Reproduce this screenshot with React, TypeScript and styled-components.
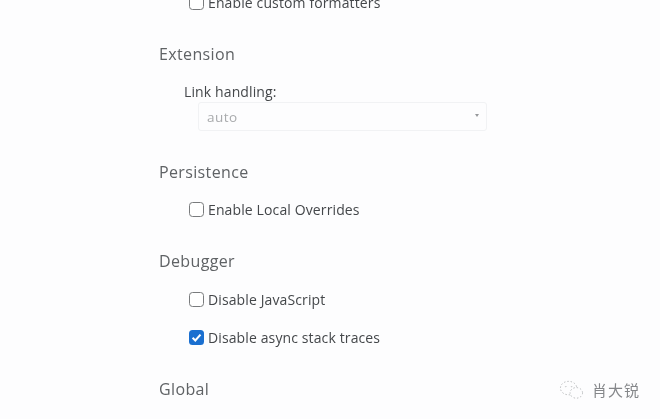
import styled, { createGlobalStyle } from 'styled-components';

const GlobalStyle = createGlobalStyle`
  html, body {
    margin: 0;
    padding: 0;
    background: #fdfdfe;
  }
`;

const Page = styled.div`
  position: relative;
  width: 660px;
  height: 419px;
  overflow: hidden;
  box-sizing: border-box;
  padding-left: 159px;
  background: #fdfdfe;
  font-family: 'Open Sans', 'Noto Sans', sans-serif;
  color: #44474a;
  filter: blur(0.35px);
`;

const Settings = styled.div`
  display: flex;
  flex-direction: column;
  margin-top: -9px;
`;

const Section = styled.section`
  display: flex;
  flex-direction: column;
`;

const SectionTitle = styled.h2<{ $gap: number }>`
  margin: ${(p) => p.$gap}px 0 0;
  height: 22px;
  line-height: 22px;
  font-size: 16px;
  font-weight: 400;
  letter-spacing: 0.36px;
  color: #5f6265;
`;

const CheckRow = styled.label<{ $top: number }>`
  display: flex;
  align-items: center;
  gap: 4px;
  height: 22px;
  margin: ${(p) => p.$top}px 0 0 30px;
  font-size: 14px;
  letter-spacing: 0.12px;
  color: #44474a;
`;

const Box = styled.span<{ $checked?: boolean }>`
  display: flex;
  align-items: center;
  justify-content: center;
  box-sizing: border-box;
  width: 15px;
  height: 15px;
  border-radius: 3.5px;
  border: ${(p) => (p.$checked ? 'none' : '1.2px solid #797b7d')};
  background: ${(p) => (p.$checked ? '#1a6fd0' : '#fff')};
`;

const FieldLabel = styled.div`
  margin: 16px 0 0 25px;
  height: 21px;
  line-height: 22px;
  font-size: 14px;
  letter-spacing: 0.12px;
  color: #44474a;
`;

const Select = styled.div`
  display: flex;
  align-items: center;
  justify-content: space-between;
  box-sizing: border-box;
  width: 289px;
  height: 29px;
  margin: 0 0 0 39px;
  padding: 0 7px 0 8px;
  border: 1px solid #f1f2f4;
  border-radius: 3px;
  background: #fdfdfe;
  font-size: 13.5px;
  letter-spacing: 0.45px;
  color: #a9abad;
`;

const Caret = styled.span`
  width: 0;
  height: 0;
  margin-bottom: 3px;
  border-left: 2.5px solid transparent;
  border-right: 2.5px solid transparent;
  border-top: 3px solid #96989b;
`;

const Watermark = styled.div`
  position: absolute;
  left: 559px;
  top: 379px;
  display: flex;
  align-items: center;
  gap: 8px;
  font-family: 'Noto Sans CJK SC', sans-serif;
  font-size: 15px;
  letter-spacing: 1px;
  color: #85878a;
`;

const Check = () => (
  <svg width="11" height="11" viewBox="0 0 11 11">
    <path d="M1.6 5.8 4.3 8.5 9.5 2.6" fill="none" stroke="#fff" strokeWidth="2" />
  </svg>
);

const WeChatMark = () => (
  <svg width="25" height="20" viewBox="0 0 26 20" fill="none" stroke="#b6b8ba" strokeWidth="1" strokeDasharray="1.5 2">
    <ellipse cx="10" cy="8" rx="8.5" ry="7" />
    <ellipse cx="18" cy="13" rx="6.5" ry="5.5" fill="#fdfdfe" />
    <circle cx="7" cy="6" r="0.6" />
    <circle cx="13" cy="6" r="0.6" />
  </svg>
);

export default function App() {
  return (
    <Page>
      <GlobalStyle />
      <Settings>
        <Section>
          <CheckRow $top={0}>
            <Box />
            Enable custom formatters
          </CheckRow>
        </Section>
        <Section>
          <SectionTitle $gap={30}>Extension</SectionTitle>
          <FieldLabel>Link handling:</FieldLabel>
          <Select>
            auto
            <Caret />
          </Select>
        </Section>
        <Section>
          <SectionTitle $gap={30}>Persistence</SectionTitle>
          <CheckRow $top={15}>
            <Box />
            Enable Local Overrides
          </CheckRow>
        </Section>
        <Section>
          <SectionTitle $gap={30}>Debugger</SectionTitle>
          <CheckRow $top={16}>
            <Box />
            Disable JavaScript
          </CheckRow>
          <CheckRow $top={16}>
            <Box $checked>
              <Check />
            </Box>
            Disable async stack traces
          </CheckRow>
        </Section>
        <Section>
          <SectionTitle $gap={30}>Global</SectionTitle>
        </Section>
      </Settings>
      <Watermark>
        <WeChatMark />
        肖大锐
      </Watermark>
    </Page>
  );
}
